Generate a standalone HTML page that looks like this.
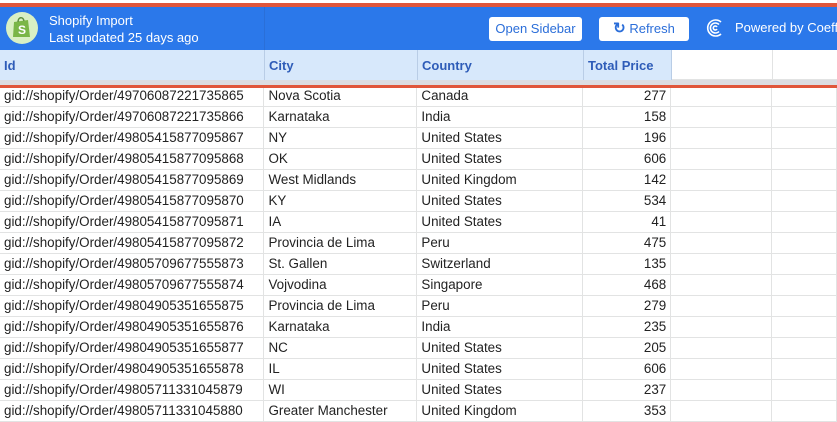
<!DOCTYPE html>
<html><head><style>
body{margin:0;width:837px;height:413px;overflow:hidden;background:#fff;font-family:"Liberation Sans",Arial,sans-serif;position:relative}
.abs{position:absolute}
table{border-collapse:collapse;position:absolute;left:0;top:86px;table-layout:fixed}
td{height:20px;border-right:1px solid #e2e3e3;border-bottom:1px solid #e2e3e3;padding:0 0 0 4px;font-size:13.4px;color:#222;white-space:nowrap;overflow:hidden;line-height:20px}
td.n{text-align:right;padding-right:4px}
.hdr{top:50px;height:30px;background:#d7e8fb;font-weight:bold;color:#2e5cb8;font-size:13px;line-height:31px;padding-left:4px;box-sizing:border-box;border-right:1px solid #b9cde6}
.btn{background:#fff;border-radius:3px;color:#2b6ed9;font-size:13px;top:17px;height:24px;line-height:24px;text-align:center}
</style></head><body>
<div class="abs" style="left:0;top:0;width:837px;height:3px;background:#fff"></div>
<div class="abs" style="left:0;top:3px;width:837px;height:4px;background:#e0563b"></div>
<div class="abs" style="left:0;top:7px;width:837px;height:43px;background:#2b78ea"></div>
<div class="abs" style="left:264px;top:7px;width:1px;height:43px;background:#2a6fd8"></div>
<div class="abs" style="left:6px;top:12px;width:32px;height:32px;border-radius:50%;background:#d9f0c4"></div>
<svg class="abs" style="left:11px;top:15px" width="22" height="24" viewBox="0 0 22 24"><path d="M3 7 L17 5 L19 22 L2 22 Z" fill="#7ab648"/><path d="M7 7 C7 2 12 1 13 6" stroke="#5e8e3e" stroke-width="1.5" fill="none"/><text x="7" y="19" font-size="12" font-weight="bold" fill="#fff" font-family="Liberation Sans">S</text></svg>
<div class="abs" style="left:49px;top:12px;color:#fff;font-size:13px;line-height:17px">Shopify Import<br>Last updated 25 days ago</div>
<div class="abs btn" style="left:489px;width:93px">Open Sidebar</div>
<div class="abs btn" style="left:599px;width:90px"><span style="font-weight:bold;font-size:15px">↻</span> Refresh</div>
<svg class="abs" style="left:705px;top:18px" width="20" height="20" viewBox="0 0 20 20" fill="none" stroke="#fff" stroke-width="1.6"><path d="M16 4 A8 8 0 1 0 16 16"/><path d="M14 6.5 A5 5 0 1 0 14 13.5"/><path d="M12 9 A2 2 0 1 0 12 11"/></svg>
<div class="abs" style="left:735px;top:20px;color:#fff;font-size:13px;white-space:nowrap">Powered by Coefficient</div>
<div class="abs hdr" style="left:0;width:265px">Id</div>
<div class="abs hdr" style="left:265px;width:153px">City</div>
<div class="abs hdr" style="left:418px;width:166px">Country</div>
<div class="abs hdr" style="left:584px;width:88px">Total Price</div>
<div class="abs" style="left:672px;top:50px;width:165px;height:30px;border-bottom:1px solid #e2e3e3;box-sizing:border-box"></div>
<div class="abs" style="left:772px;top:50px;width:1px;height:30px;background:#e2e3e3"></div>
<div class="abs" style="left:0;top:80px;width:837px;height:5px;background:#dcdde2"></div>
<table>
<colgroup><col style="width:264px"><col style="width:153px"><col style="width:166px"><col style="width:88px"><col style="width:101px"><col style="width:65px"></colgroup>
<tr><td>gid://shopify/Order/49706087221735865</td><td>Nova Scotia</td><td>Canada</td><td class="n">277</td><td></td><td></td></tr>
<tr><td>gid://shopify/Order/49706087221735866</td><td>Karnataka</td><td>India</td><td class="n">158</td><td></td><td></td></tr>
<tr><td>gid://shopify/Order/49805415877095867</td><td>NY</td><td>United States</td><td class="n">196</td><td></td><td></td></tr>
<tr><td>gid://shopify/Order/49805415877095868</td><td>OK</td><td>United States</td><td class="n">606</td><td></td><td></td></tr>
<tr><td>gid://shopify/Order/49805415877095869</td><td>West Midlands</td><td>United Kingdom</td><td class="n">142</td><td></td><td></td></tr>
<tr><td>gid://shopify/Order/49805415877095870</td><td>KY</td><td>United States</td><td class="n">534</td><td></td><td></td></tr>
<tr><td>gid://shopify/Order/49805415877095871</td><td>IA</td><td>United States</td><td class="n">41</td><td></td><td></td></tr>
<tr><td>gid://shopify/Order/49805415877095872</td><td>Provincia de Lima</td><td>Peru</td><td class="n">475</td><td></td><td></td></tr>
<tr><td>gid://shopify/Order/49805709677555873</td><td>St. Gallen</td><td>Switzerland</td><td class="n">135</td><td></td><td></td></tr>
<tr><td>gid://shopify/Order/49805709677555874</td><td>Vojvodina</td><td>Singapore</td><td class="n">468</td><td></td><td></td></tr>
<tr><td>gid://shopify/Order/49804905351655875</td><td>Provincia de Lima</td><td>Peru</td><td class="n">279</td><td></td><td></td></tr>
<tr><td>gid://shopify/Order/49804905351655876</td><td>Karnataka</td><td>India</td><td class="n">235</td><td></td><td></td></tr>
<tr><td>gid://shopify/Order/49804905351655877</td><td>NC</td><td>United States</td><td class="n">205</td><td></td><td></td></tr>
<tr><td>gid://shopify/Order/49804905351655878</td><td>IL</td><td>United States</td><td class="n">606</td><td></td><td></td></tr>
<tr><td>gid://shopify/Order/49805711331045879</td><td>WI</td><td>United States</td><td class="n">237</td><td></td><td></td></tr>
<tr><td>gid://shopify/Order/49805711331045880</td><td>Greater Manchester</td><td>United Kingdom</td><td class="n">353</td><td></td><td></td></tr>
</table>
<div class="abs" style="left:0;top:85px;width:837px;height:3px;background:#e0563b"></div>
</body></html>
